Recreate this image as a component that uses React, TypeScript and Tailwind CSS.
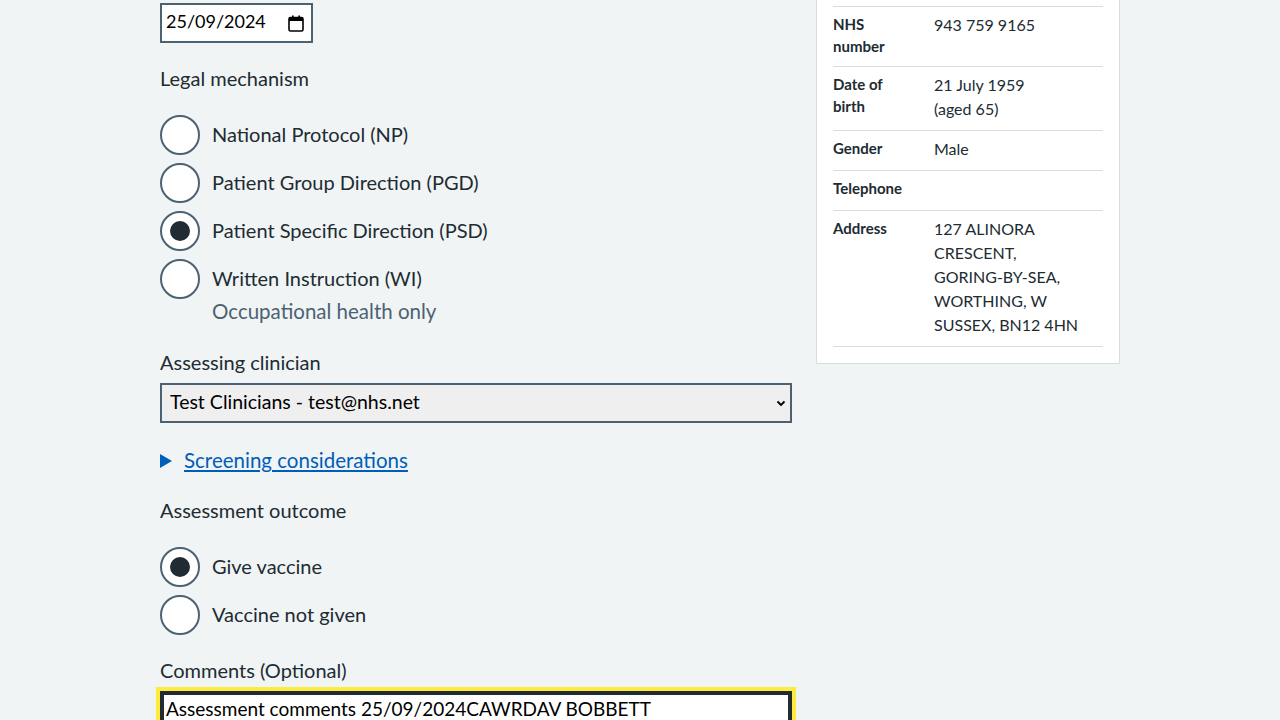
import React from "react";

const font = { fontFamily: "Lato, 'Noto Sans', sans-serif" };

function Radio({ label, checked, hint }: { label: string; checked?: boolean; hint?: string }) {
  return (
    <div className="mb-2">
      <div className="flex items-start">
        <span className="w-10 h-10 shrink-0 rounded-full border-2 border-[#4c6272] bg-white flex items-center justify-center">
          {checked && <span className="w-5 h-5 rounded-full bg-[#212b32]" />}
        </span>
        <span className="pl-3 pt-[7px] pb-[9px] text-[20px] leading-6 text-[#212b32]">{label}</span>
      </div>
      {hint && <div className="pl-[52px] text-[20.5px] leading-6 text-[#4c6272]">{hint}</div>}
    </div>
  );
}

function Row({ k, children, last }: { k: string; children?: React.ReactNode; last?: boolean }) {
  return (
    <div className={"flex border-t border-[#d8dde0] pt-[6px] pb-[9px]" + (last ? " border-b" : "")}>
      <div className="w-[101px] shrink-0 pr-5 text-[15px] leading-[22px] font-bold text-[#212b32]">{k}</div>
      <div className="flex-1 min-h-6 text-[16px] leading-6 text-[#212b32]">{children}</div>
    </div>
  );
}

export default function App() {
  return (
    <div className="w-[1280px] h-[720px] overflow-hidden bg-[#f0f4f5]" style={font}>
      <div className="flex gap-6 ml-[160px]">
        <div className="w-[632px] shrink-0">
          <div className="mt-[3px] w-[153px] h-10 border-2 border-[#4c6272] bg-white flex items-center justify-between pl-[4px] pr-[7px]">
            <span className="text-[18px] text-black leading-6 pb-1">25/09/2024</span>
            <svg width="16" height="17" viewBox="0 0 16 17" fill="none">
              <rect x="1" y="2.5" width="14" height="13.5" rx="1.5" stroke="#000" strokeWidth="1.6" />
              <rect x="1" y="2.5" width="14" height="3.5" fill="#000" />
              <rect x="4" y="0.5" width="1.6" height="3" fill="#000" />
              <rect x="10.4" y="0.5" width="1.6" height="3" fill="#000" />
            </svg>
          </div>
          <div className="mt-[22px] text-[20px] leading-[26px] pb-[2px] text-[#212b32]">Legal mechanism</div>
          <div className="mt-[22px]">
            <Radio label="National Protocol (NP)" />
            <Radio label="Patient Group Direction (PGD)" />
            <Radio label="Patient Specific Direction (PSD)" checked />
            <Radio label="Written Instruction (WI)" hint="Occupational health only" />
          </div>
          <div className="mt-[26px] text-[20px] leading-[26px] pb-[2px] text-[#212b32]">Assessing clinician</div>
          <div className="mt-[6px] h-10 border-2 border-[#4c6272] bg-[#efefef] flex items-center justify-between pl-2 pr-[4px]">
            <span className="text-[19.5px] text-black leading-6 pb-[2px]">Test Clinicians - test@nhs.net</span>
            <svg width="10" height="7" viewBox="0 0 10 7" fill="none">
              <path d="M1.5 1.5 L5 5 L8.5 1.5" stroke="#000" strokeWidth="1.8" />
            </svg>
          </div>
          <div className="mt-[24px] flex items-center h-7">
            <svg width="12" height="14" viewBox="0 0 12 14" className="mr-3">
              <path d="M0 0 L12 7 L0 14 Z" fill="#005eb8" />
            </svg>
            <span className="text-[20.5px] leading-[26px] pb-[2px] text-[#005eb8] underline underline-offset-2">Screening considerations</span>
          </div>
          <div className="mt-[23px] text-[20px] leading-[24px] pb-[4px] text-[#212b32]">Assessment outcome</div>
          <div className="mt-[21px]">
            <Radio label="Give vaccine" checked />
            <Radio label="Vaccine not given" />
          </div>
          <div className="mt-[22px] text-[20px] leading-[26px] pb-[2px] text-[#212b32]">Comments (Optional)</div>
          <div className="mt-[2px] -mx-1 border-4 border-[#ffeb3b]">
            <div className="border-4 border-[#212b32] bg-white h-[80px] pl-[2px] pt-[2px] text-[19px] leading-6 text-black">
              Assessment comments 25/09/2024CAWRDAV BOBBETT
            </div>
          </div>
        </div>
        <div className="w-[304px] shrink-0">
          <div className="-mt-[11px] bg-white border border-[#d8dde0] px-4 pt-4 pb-4">
            <Row k="NHS number">943 759 9165</Row>
            <Row k="Date of birth">
              21 July 1959
              <br />
              (aged 65)
            </Row>
            <Row k="Gender">Male</Row>
            <Row k="Telephone"></Row>
            <Row k="Address" last>
              127 ALINORA
              <br />
              CRESCENT,
              <br />
              GORING-BY-SEA,
              <br />
              WORTHING, W
              <br />
              SUSSEX, BN12 4HN
            </Row>
          </div>
        </div>
      </div>
    </div>
  );
}
